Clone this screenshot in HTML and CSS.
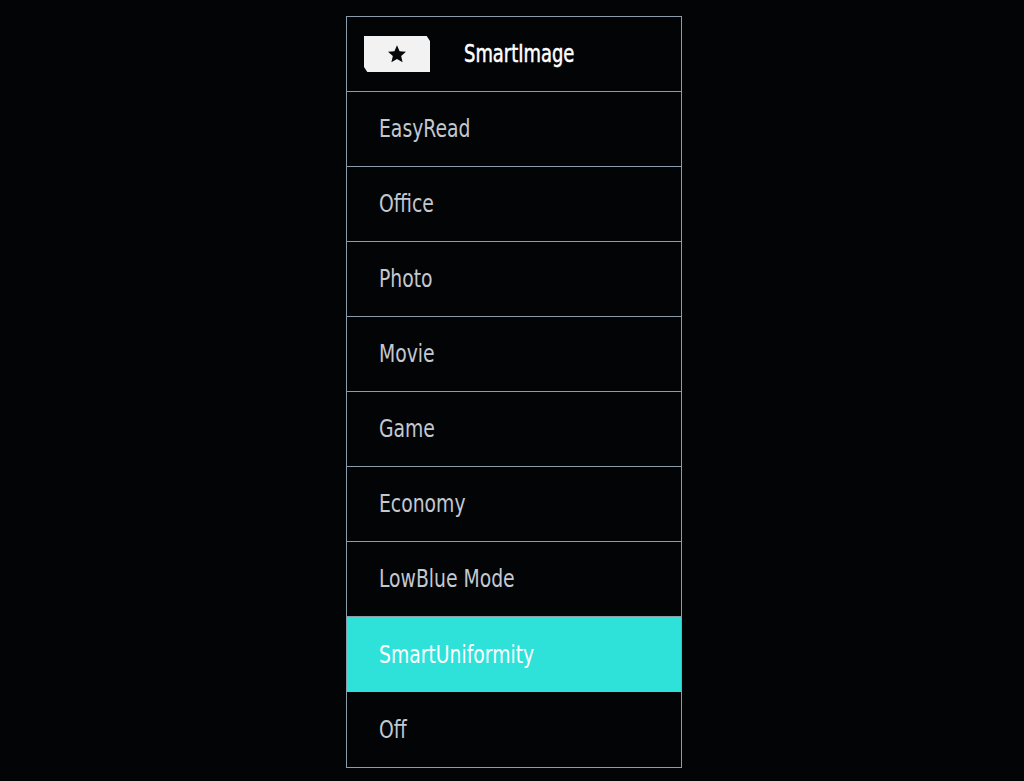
FILE: index.html
```html
<!DOCTYPE html>
<html lang="en">
<head>
  <meta charset="UTF-8">
  <title>SmartImage</title>
  <link rel="stylesheet" href="styles.css">
</head>
<body>
<div class="osd">
  <div class="osd-head">
    <div class="badge">
      <svg width="20" height="20" viewBox="0 0 24 24"><path d="M12 1.5l3.1 7.1 7.7.7-5.8 5.1 1.7 7.6L12 18l-6.7 4 1.7-7.6-5.8-5.1 7.7-.7z" fill="#05070a"/></svg>
    </div>
    <span class="label title">SmartImage</span>
  </div>
  <div class="item"><span class="label">EasyRead</span></div>
  <div class="item"><span class="label">Office</span></div>
  <div class="item"><span class="label">Photo</span></div>
  <div class="item"><span class="label">Movie</span></div>
  <div class="item"><span class="label">Game</span></div>
  <div class="item"><span class="label">Economy</span></div>
  <div class="item"><span class="label">LowBlue Mode</span></div>
  <div class="item active"><span class="label">SmartUniformity</span></div>
  <div class="item"><span class="label">Off</span></div>
</div>
</body>
</html>
```

FILE: styles.css
```css
body {
  margin: 0;
  background: #030406;
  font-family: "DejaVu Sans", sans-serif;
  font-stretch: condensed;
}
.osd {
  width: 334px;
  margin: 16px 0 0 346px;
  border: 1px solid #8d9cab;
}
.osd-head, .item {
  height: 75px;
  box-sizing: border-box;
  display: flex;
  align-items: center;
  border-bottom: 1px solid #8d9cab;
}
.item:last-child {
  border-bottom: none;
}
.osd-head {
  padding-left: 17px;
}
.badge {
  width: 66px;
  height: 36px;
  background: #f2f2f2;
  clip-path: polygon(0 0, 95% 0, 100% 14%, 100% 100%, 5% 100%, 0 86%);
  display: flex;
  align-items: center;
  justify-content: center;
}
.label {
  display: inline-block;
  font-size: 24px;
  transform: scaleX(0.87);
  transform-origin: left center;
}
.title {
  margin-left: 34px;
  color: #ffffff;
  -webkit-text-stroke: 0.5px #ffffff;
  transform: scaleX(0.83);
}
.item {
  padding-left: 32px;
  color: #c4c8d0;
}
.item.active {
  background: #2ee2da;
  color: #ffffff;
  border-top: 1px solid #2ee2da;
  border-bottom-color: #2ee2da;
}
```
